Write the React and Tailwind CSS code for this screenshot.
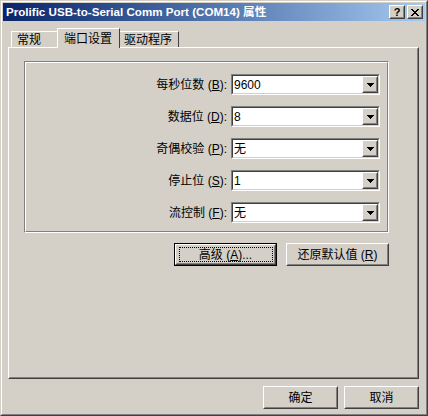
import React from 'react';

const CJK = "font-['Liberation_Sans','Noto_Sans_CJK_SC',sans-serif]";

// classic win2k raised box (buttons)
function Raised({ className = '', children }) {
  return (
    <div className={`border border-t-white border-l-white border-r-[#404040] border-b-[#404040] ${className}`}>
      <div className="h-full w-full border border-t-[#d4d0c8] border-l-[#d4d0c8] border-r-[#808080] border-b-[#808080] flex items-center justify-center">
        {children}
      </div>
    </div>
  );
}

function Arrow() {
  return (
    <svg width="7" height="4" viewBox="0 0 7 4">
      <path d="M0 0h7v1H0zM1 1h5v1H1zM2 2h3v1H2zM3 3h1v1H3z" fill="#000" />
    </svg>
  );
}

function Combo({ value }) {
  return (
    <div className="w-[149px] h-[21px] border border-t-[#808080] border-l-[#808080] border-r-white border-b-white">
      <div className="h-full w-full border border-t-[#404040] border-l-[#404040] border-r-[#d4d0c8] border-b-[#d4d0c8] bg-white flex items-center">
        <span className={`flex-1 pl-[1px] text-[12px] leading-none text-black ${CJK}`}>{value}</span>
        <Raised className="w-[16px] h-[17px] bg-[#d4d0c8]">
          <Arrow />
        </Raised>
      </div>
    </div>
  );
}

function Row({ label, keyChar, value }) {
  return (
    <div className="flex items-center justify-end gap-[4px]">
      <span className={`text-[12px] text-black ${CJK}`}>
        {label} (<u>{keyChar}</u>):
      </span>
      <Combo value={value} />
    </div>
  );
}

function Button({ children, isDefault = false, className = '' }) {
  if (isDefault) {
    return (
      <div className={`border border-black ${className}`}>
        <Raised className="h-full w-full bg-[#d4d0c8]">
          <div className="h-[15px] w-[94px] border border-dotted border-black flex items-center justify-center">
            <span className={`text-[12px] leading-none text-black ${CJK}`}>{children}</span>
          </div>
        </Raised>
      </div>
    );
  }
  return (
    <Raised className={`bg-[#d4d0c8] ${className}`}>
      <span className={`text-[12px] leading-none text-black ${CJK}`}>{children}</span>
    </Raised>
  );
}

function Tab({ label, selected = false, className = '' }) {
  if (selected) {
    return (
      <div className={`relative z-10 -mx-[2px] -mb-[1px] h-[20px] pl-[6px] bg-[#d4d0c8] border-t border-l border-t-white border-l-white border-r border-r-[#404040] flex items-start pt-[1px] ${className}`}>
        <span className={`text-[12px] text-black ${CJK}`}>{label}</span>
      </div>
    );
  }
  return (
    <div className={`h-[16px] pl-[5px] bg-[#d4d0c8] border-t border-l border-t-white border-l-white border-r border-r-[#404040] flex items-start ${className}`}>
      <span className={`text-[12px] leading-[16px] text-black ${CJK}`}>{label}</span>
    </div>
  );
}

export default function App() {
  const rows = [
    { label: '每秒位数', k: 'B', v: '9600' },
    { label: '数据位', k: 'D', v: '8' },
    { label: '奇偶校验', k: 'P', v: '无' },
    { label: '停止位', k: 'S', v: '1' },
    { label: '流控制', k: 'F', v: '无' },
  ];

  return (
    <div className="w-[428px] h-[416px] bg-[#d4d0c8] border border-t-[#d4d0c8] border-l-[#d4d0c8] border-r-[#404040] border-b-[#404040]">
      <div className="h-full w-full border border-t-white border-l-white border-r-[#808080] border-b-[#808080] p-[1px] flex flex-col">
        {/* title bar */}
        <div className="h-[18px] flex items-center bg-gradient-to-r from-[#0a246a] to-[#a6caf0] pl-[3px] pr-[2px]">
          <span className="flex-1 text-[11.6px] font-bold text-white font-['Liberation_Sans','Noto_Sans_CJK_SC',sans-serif] whitespace-nowrap">
            Prolific USB-to-Serial Comm Port (COM14) 属性
          </span>
          <div className="flex gap-[2px]">
            <Raised className="w-[16px] h-[14px] bg-[#d4d0c8]">
              <span className="text-[11px] font-bold leading-none text-black font-['Liberation_Sans',sans-serif]">?</span>
            </Raised>
            <Raised className="w-[16px] h-[14px] bg-[#d4d0c8]">
              <svg width="8" height="7" viewBox="0 0 8 7">
                <path d="M0 0h2v1H0zM6 0h2v1H6zM1 1h2v1H1zM5 1h2v1H5zM2 2h4v1H2zM3 3h2v1H3zM2 4h4v1H2zM1 5h2v1H1zM5 5h2v1H5zM0 6h2v1H0zM6 6h2v1H6z" fill="#000" />
              </svg>
            </Raised>
          </div>
        </div>

        {/* body */}
        <div className="flex-1 flex flex-col pl-[5px] pr-[6px] pt-[7px]">
          <div className="flex items-end pl-[3px] h-[19px]">
            <Tab label="常规" className="w-[48px]" />
            <Tab label="端口设置" selected className="w-[63px]" />
            <Tab label="驱动程序" className="w-[61px]" />
          </div>

          {/* panel */}
          <div className="h-[332px] border border-t-white border-l-white border-r-[#404040] border-b-[#404040]">
            <div className="h-full w-full border border-t-transparent border-l-transparent border-r-[#808080] border-b-[#808080] pl-[14px] pt-[12px] flex flex-col">
              {/* etched group */}
              <div className="w-[365px] h-[172px] border border-t-[#808080] border-l-[#808080] border-r-white border-b-white">
                <div className="h-full w-full border border-t-white border-l-white border-r-[#808080] border-b-[#808080] pt-[11px] pr-[7px] flex flex-col gap-[11px]">
                  {rows.map((r) => (
                    <Row key={r.k} label={r.label} keyChar={r.k} value={r.v} />
                  ))}
                </div>
              </div>
              <div className="w-[365px] flex justify-end gap-[9px] mt-[10px]">
                <Button isDefault className="w-[103px] h-[23px]">
                  高级 (<u>A</u>)...
                </Button>
                <Button className="w-[103px] h-[23px]">
                  还原默认值 (<u>R</u>)
                </Button>
              </div>
            </div>
          </div>

          {/* dialog buttons */}
          <div className="flex justify-end gap-[6px] mt-[7px]">
            <Button className="w-[75px] h-[23px]">确定</Button>
            <Button className="w-[75px] h-[23px]">取消</Button>
          </div>
        </div>
      </div>
    </div>
  );
}
